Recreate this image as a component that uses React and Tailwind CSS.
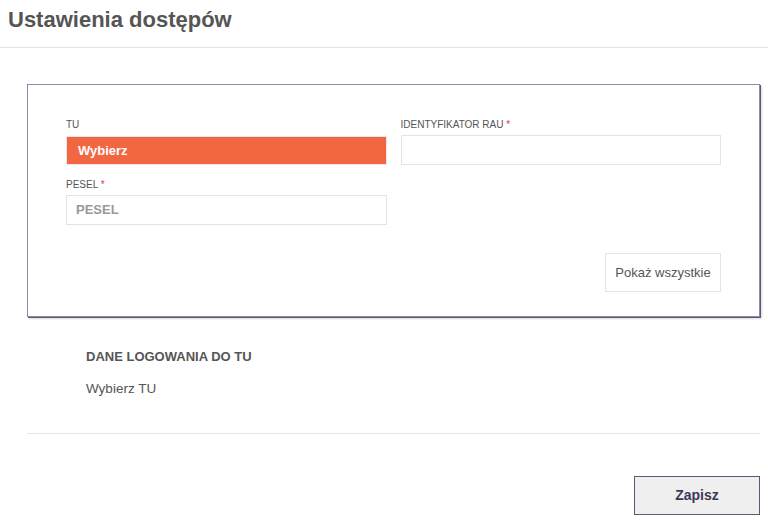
export default function App() {
  return (
    <div className="w-[768px] h-[522px] bg-white overflow-hidden font-['Liberation_Sans',Arial,sans-serif] text-[#555]">
      {/* Header */}
      <div className="h-[48px] border-b border-[#e4e2ef] px-[8px] pt-[6px]">
        <h1 className="text-[22px] font-bold leading-[28px] text-[#555]">Ustawienia dostępów</h1>
      </div>

      <div className="pl-[27px] pr-[8px] pt-[36px]">
        {/* Card */}
        <div className="w-[733px] h-[233px] border border-[#8e8aa6] bg-white shadow-[1px_1px_0_#5c5878,2px_2px_2px_#d8d8d8] px-[38px] pt-[34px]">
          <div className="grid grid-cols-2 gap-x-[14px]">
            <div>
              <div className="text-[10px] leading-[12px] uppercase text-[#555]">TU</div>
              <div className="mt-[5px] h-[29px] bg-[#f26641] border border-[#e9e6f0] flex items-center pl-[11px] text-white text-[13px] font-bold">
                Wybierz
              </div>
              <div className="mt-[14px] text-[10px] leading-[12px] uppercase text-[#555]">
                PESEL <span className="text-[#e53935]">*</span>
              </div>
              <div className="mt-[4px] h-[30px] border border-[#e4e2ef] flex items-center pl-[9px] text-[13px] font-bold text-[#999]">
                PESEL
              </div>
            </div>
            <div>
              <div className="text-[10px] leading-[12px] uppercase text-[#555]">
                IDENTYFIKATOR RAU <span className="text-[#e53935]">*</span>
              </div>
              <div className="mt-[4px] h-[30px] border border-[#e4e2ef]"></div>
              <div className="mt-[88px] flex justify-end">
                <button className="h-[39px] w-[116px] border border-[#e4e2ef] bg-white text-[13px] text-[#555]">
                  Pokaż wszystkie
                </button>
              </div>
            </div>
          </div>
        </div>

        {/* Login data */}
        <div className="pl-[59px] pt-[32px]">
          <div className="text-[13px] font-bold leading-[16px] text-[#555]">DANE LOGOWANIA DO TU</div>
          <div className="mt-[16px] text-[13.5px] leading-[16px] text-[#555]">Wybierz TU</div>
        </div>

        <div className="mt-[36px] w-[733px] border-t border-[#e4e2ef]"></div>

        <div className="w-[733px] flex justify-end pt-[42px]">
          <button className="w-[126px] h-[39px] bg-[#efefef] border border-[#5c5878] text-[14px] font-bold text-[#3b3957]">
            Zapisz
          </button>
        </div>
      </div>
    </div>
  );
}
